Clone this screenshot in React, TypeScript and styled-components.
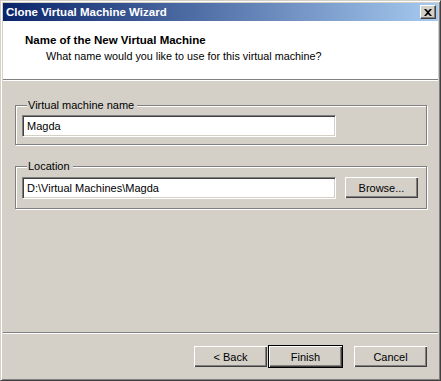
import React from 'react'
import styled, { createGlobalStyle } from 'styled-components'

const GlobalStyle = createGlobalStyle`
  html, body {
    margin: 0;
    padding: 0;
    background: #d4d0c8;
  }
  * {
    box-sizing: border-box;
  }
`

const FONT = `Tahoma, "Liberation Sans", Arial, sans-serif`

const Window = styled.div`
  width: 441px;
  height: 381px;
  display: flex;
  flex-direction: column;
  background: #d4d0c8;
  font-family: ${FONT};
  font-size: 11px;
  color: #000;
  border-top: 1px solid #d4d0c8;
  border-left: 1px solid #d4d0c8;
  border-right: 1px solid #404040;
  border-bottom: 1px solid #404040;
  box-shadow: inset 1px 1px 0 #ffffff, inset -1px -1px 0 #808080;
  padding: 2px;
`

const TitleBar = styled.div`
  height: 18px;
  flex: none;
  display: flex;
  align-items: center;
  justify-content: space-between;
  padding: 0 2px 0 3px;
  background: linear-gradient(to right, #0a246a, #a6caf0);
  color: #fff;
  font-weight: bold;
  font-size: 11.5px;
`

const CloseButton = styled.div`
  width: 16px;
  height: 14px;
  background: #d4d0c8;
  border-top: 1px solid #fff;
  border-left: 1px solid #fff;
  border-right: 1px solid #404040;
  border-bottom: 1px solid #404040;
  box-shadow: inset -1px -1px 0 #808080;
  display: flex;
  align-items: center;
  justify-content: center;
`

const Header = styled.div`
  height: 59px;
  flex: none;
  background: #fff;
  border-bottom: 1px solid #808080;
  box-shadow: 0 1px 0 #fff;
  padding: 12px 0 0 22px;
`

const HeaderTitle = styled.div`
  font-weight: bold;
  font-size: 11.5px;
  line-height: 14px;
`

const HeaderSub = styled.div`
  padding-left: 21px;
  margin-top: 2px;
  line-height: 14px;
  font-size: 10.8px;
`

const Body = styled.div`
  flex: 1;
  display: flex;
  flex-direction: column;
  gap: 15px;
  padding: 19px 11px 0 12px;
`

const Group = styled.fieldset<{ $tall?: boolean }>`
  margin: 0;
  padding: 3px 6px ${({ $tall }) => ($tall ? '9px' : '7px')} 6px;
  border: 1px solid #808080;
  box-shadow: inset 1px 1px 0 #fff, 1px 1px 0 #fff;
  display: flex;
  align-items: center;
  gap: 8px;
`

const Legend = styled.legend`
  padding: 0 3px 0 1px;
  margin-left: 5px;
  line-height: 13px;
  background: #d4d0c8;
`

const TextBox = styled.div`
  width: 314px;
  height: 22px;
  background: #fff;
  border-top: 1px solid #808080;
  border-left: 1px solid #808080;
  border-right: 1px solid #fff;
  border-bottom: 1px solid #fff;
  box-shadow: inset 1px 1px 0 #404040, inset -1px -1px 0 #d4d0c8;
  display: flex;
  align-items: center;
  padding-left: 4px;
`

const Button = styled.div<{ $default?: boolean }>`
  width: 75px;
  height: 23px;
  display: flex;
  align-items: center;
  justify-content: center;
  background: #d4d0c8;
  border: 1px solid ${({ $default }) => ($default ? '#000' : 'transparent')};
  box-shadow: inset 1px 1px 0 #fff, inset -1px -1px 0 #404040,
    inset -2px -2px 0 #808080;
`

const Footer = styled.div`
  flex: none;
  border-top: 1px solid #808080;
  box-shadow: inset 0 1px 0 #fff;
  display: flex;
  justify-content: flex-end;
  padding: 12px 10px 10px 0;
`

const ButtonGroup = styled.div`
  display: flex;
`

const Spacer = styled.div`
  width: 10px;
`

const App: React.FC = () => {
  return (
    <>
      <GlobalStyle />
      <Window>
        <TitleBar>
          <span>Clone Virtual Machine Wizard</span>
          <CloseButton>
            <svg width="8" height="7" viewBox="0 0 8 7">
              <path d="M0 0h2l2 2 2-2h2L5 3.5 8 7H6L4 5 2 7H0l3-3.5z" fill="#000" />
            </svg>
          </CloseButton>
        </TitleBar>
        <Header>
          <HeaderTitle>Name of the New Virtual Machine</HeaderTitle>
          <HeaderSub>What name would you like to use for this virtual machine?</HeaderSub>
        </Header>
        <Body>
          <Group>
            <Legend>Virtual machine name</Legend>
            <TextBox>Magda</TextBox>
          </Group>
          <Group $tall>
            <Legend>Location</Legend>
            <TextBox>D:\Virtual Machines\Magda</TextBox>
            <Button>Browse...</Button>
          </Group>
        </Body>
        <Footer>
          <ButtonGroup>
            <Button>&lt; Back</Button>
            <Button $default>Finish</Button>
          </ButtonGroup>
          <Spacer />
          <Button>Cancel</Button>
        </Footer>
      </Window>
    </>
  )
}

export default App
